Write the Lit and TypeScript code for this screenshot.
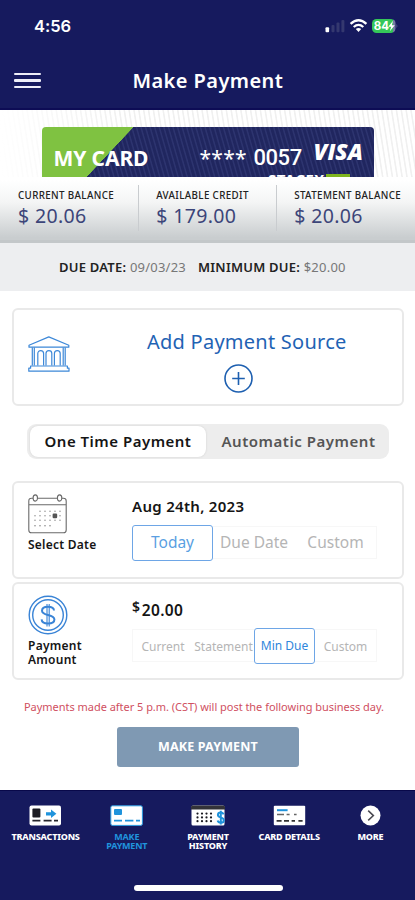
import { LitElement, html, svg, css } from "lit";
import { customElement } from "lit/decorators.js";

const dots = (xs: number[], ys: number[], r: number, fill: string) =>
  ys.map((y) => xs.map((x) => svg`<circle cx=${x} cy=${y} r=${r} fill=${fill} />`));

const bank = html`<svg width="42" height="37" viewBox="0 0 42 37" fill="none" stroke="#3d88d8" stroke-width="1.2" stroke-linejoin="round">
  <path d="M1 9.2 L20.8 .9 L40.8 9.2 V11.2 H1 Z" />
  <path d="M4.3 11.5V29.5M6.3 11.5V29.5M35.2 11.5V29.5M37.2 11.5V29.5" />
  <path d="M9.8 29.5V17.5a2.9 2.9 0 0 1 5.8 0V29.5M18 29.5V17.5a2.9 2.9 0 0 1 5.8 0V29.5M26.4 29.5V17.5a2.9 2.9 0 0 1 5.8 0V29.5" />
  <path d="M2.6 30H39.4V32.2H41V35.2H.8V32.2H2.6Z" />
</svg>`;

const calendar = html`<svg width="39" height="40" viewBox="0 0 39 40" fill="none" stroke="#6a6a6a" stroke-width="1.1">
  <path d="M5 4.3H3.5Q.8 4.3 .8 7V36Q.8 38.8 3.5 38.8H35.4Q38.2 38.8 38.2 36V7Q38.2 4.3 35.4 4.3H34M9.5 4.3H29.5M.8 10.8H38.2" />
  <ellipse cx="7.3" cy="4" rx="2.2" ry="3.1" /><ellipse cx="31.6" cy="4" rx="2.2" ry="3.1" />
  <g stroke="none">
    ${dots([12, 17, 22, 27, 32], [17.2], 0.8, "#999")}
    ${dots([7, 12, 17, 22, 27, 32], [21.8, 26.2], 0.8, "#999")}
    ${dots([7, 12, 17, 22], [31.8], 0.8, "#888")}
    <rect x="24.6" y="19.6" width="4.6" height="4.6" rx="1.2" fill="#555" />
  </g>
</svg>`;

const coin = html`<svg width="40" height="40" viewBox="0 0 40 40" fill="none" stroke="#3a84d6" stroke-width="1.4">
  <circle cx="20" cy="20" r="18.8" /><circle cx="20" cy="20" r="15.3" />
  <path d="M26 15.5C25.8 12.8 23.2 11.8 20 11.8C16.5 11.8 14 13.2 14 15.7C14 18.4 16.8 19.2 20 20C23.4 20.8 26.4 21.8 26.4 24.6C26.4 27.3 23.6 28.6 20 28.6C16.4 28.6 13.8 27.2 13.6 24.4" stroke-width="2" />
  <path d="M19 9V31.4M21.2 9V31.4" stroke-width="1.1" />
</svg>`;

const plus = html`<svg width="29" height="29" viewBox="0 0 29 29" fill="none" stroke="#1d5fb0" stroke-width="1.6">
  <circle cx="14.5" cy="14.5" r="13.5" /><path d="M14.5 8V21M8.2 14.5H20.8" />
</svg>`;

const navTransactions = html`<svg width="33" height="21" viewBox="0 0 33 21">
  <rect x=".5" y=".5" width="31.5" height="20" rx="2" fill="#fff" />
  <rect x="3.4" y="3.6" width="8" height="9" rx="1" fill="#1b1b22" />
  <path d="M17 7.2h5V4.6l5.4 4.2-5.4 4.2v-2.6h-5z" fill="#1f93dc" />
  <path d="M3.4 15.6H11.4M14.6 15.6H22.6M25 15.6H29" stroke="#26262c" stroke-width="1.7" />
</svg>`;
const navPay = html`<svg width="33" height="21" viewBox="0 0 33 21">
  <rect x=".8" y=".8" width="31.6" height="19.6" rx="1.6" fill="#fff" stroke="#2a9be0" stroke-width="1" />
  <rect x="4" y="4" width="8" height="6" rx="1" fill="#1f93dc" />
  <path d="M4 15.6H12M15 15.6H23.4M26 15.6H30" stroke="#1f93dc" stroke-width="1.7" />
</svg>`;
const navHistory = html`<svg width="34" height="21" viewBox="0 0 34 21">
  <rect x=".5" y=".5" width="33" height="20" rx="1.5" fill="#fff" />
  <path d="M0 2.2Q0 .5 1.7 .5H32.3Q34 .5 34 2.2V4.6H0Z" fill="#333338" />
  ${dots([6.5, 11, 15.5, 20], [8.6, 12.4, 16.2], 1.1, "#1b1b22")}
  <path d="M32.6 9.4C32 8 31 7.6 29.8 7.6C28 7.6 26.9 8.5 26.9 10C26.9 13.2 32.8 11.6 32.8 15.2C32.8 16.8 31.6 17.8 29.8 17.8C28.1 17.8 27 17 26.6 15.6M29.8 5.8V19.6" fill="none" stroke="#1f93dc" stroke-width="2" />
</svg>`;
const navDetails = html`<svg width="33" height="21" viewBox="0 0 33 21">
  <rect x=".8" y=".8" width="31.4" height="19.4" rx="1" fill="#fff" />
  <path d="M4 5.2H14.6" stroke="#1f93dc" stroke-width="2" />
  <path d="M4 9.4H11M13.6 9.4H16.6M21 9.4H23.6" stroke="#666" stroke-width="1.5" />
  <path d="M3.6 15.8H8.6M11 15.8H16M18.6 15.8H22M25.4 15.8H29.6" stroke="#333" stroke-width="1.7" />
</svg>`;
const navMore = html`<svg width="21" height="21" viewBox="0 0 21 21">
  <circle cx="10.5" cy="10.5" r="10" fill="#fff" />
  <path d="M8.2 5.6L13.4 10.6L8.2 15.4" fill="none" stroke="#4a4a52" stroke-width="1.5" />
</svg>`;

@customElement("app-root")
export class AppRoot extends LitElement {
  static styles = css`
    :host { display: block; width: 415px; height: 900px; overflow: hidden; background: #fff; font-family: "Noto Sans", "Open Sans", sans-serif; color: #151515; }
    * { box-sizing: border-box; }
    svg { display: block; flex: none; }
    .screen { display: flex; flex-direction: column; height: 900px; white-space: nowrap; }
    .header { height: 110px; background: #161a5e; border-bottom: 2px solid #0d0c55; color: #fff; flex: none; }
    .status { height: 52px; padding: 16px 17px 0 34px; display: flex; justify-content: space-between; }
    .time { font: 600 16.5px/21px Inter, sans-serif; letter-spacing: -.05px; }
    .bar { height: 57px; display: grid; grid-template-columns: 132.5px 1fr; align-items: center; }
    .menu { margin-left: 14px; width: 27px; height: 16px; display: flex; flex-direction: column; justify-content: space-between; }
    .menu i { height: 2.4px; background: #eeeef8; border-radius: 1px; }
    .title { font-size: 20px; font-weight: 600; letter-spacing: .42px; line-height: 30px; }

    .hero { height: 67px; flex: none; padding: 17px 41px 0 42px; background: linear-gradient(90deg, #fff, #ffffff00 30%), repeating-linear-gradient(81deg, #fff 0 2.4px, #f0f0f0 3.2px 4px, #fff 4.8px); }
    .plastic { height: 50px; border-radius: 4px 4px 0 0; overflow: hidden; position: relative; color: #fff;
      background: linear-gradient(133.2deg, #7fc241 0 66.5px, transparent 67px), repeating-linear-gradient(74deg, #20265f 0 2px, #2d346f 3px 3.6px, #20265f 4.4px); }
    .face { display: grid; grid-template-columns: 146px 54px 60px 1fr; padding: 15px 0 0 11.5px; line-height: 32px; height: 50px; }
    .brand { font-size: 21px; font-weight: 700; letter-spacing: -.1px; }
    .mask { font-size: 21px; letter-spacing: .3px; }
    .last { font: 500 22px/31px Roboto, sans-serif; letter-spacing: -.45px; }
    .visa { font: italic 800 22.5px/19px "Open Sans", sans-serif; letter-spacing: 0; }
    .peek { position: absolute; left: 226px; top: 46.5px; display: flex; font-weight: 700; font-size: 15px; line-height: 10px; }
    .peek span { width: 58px; letter-spacing: .5px; }
    .peek b { width: 24px; height: 4px; background: #7fb51f; }

    .balances { height: 66px; flex: none; display: grid; grid-template-columns: 138px 138px 1fr; background: linear-gradient(#fff 5%, #f4f5f5 40%, #c9cdcf 96%); border-bottom: 3px solid #c3c7c9; padding-top: 8px; }
    .bal { padding: 4px 0 0 17.2px; height: 46px; border-left: 1px solid #c9cccf; }
    .bal.first { border-color: transparent; padding-left: 17px; }
    .lab { font-size: 9.8px; font-weight: 500; line-height: 13px; letter-spacing: .36px; color: #222; }
    .val { font-size: 19.5px; font-weight: 400; line-height: 28px; color: #3c4579; letter-spacing: .36px; }

    .due { height: 48px; flex: none; background: #edeef0; display: flex; padding-left: 59px; line-height: 48px; font-size: 13px; letter-spacing: .23px; color: #777; }
    .due b { color: #222; font-weight: 600; }
    .d1 { width: 139px; }

    .box { border: 2px solid #e9e9e9; border-radius: 6px; margin-left: 12px; width: 392px; flex: none; display: grid; grid-template-columns: 118px 1fr; background: #fff; }
    .source { height: 98px; margin-top: 17px; }
    .source .ic { padding: 26px 0 0 14px; }
    .add { padding: 20px 0 0 15px; color: #1f63b4; font-size: 20px; line-height: 24px; letter-spacing: .25px; }
    .add svg { margin: 9.5px 0 0 76.5px; }

    .seg { margin: 18px 0 22px 27px; width: 362px; height: 35px; flex: none; background: #ededed; border-radius: 9px; padding: 2px 2.5px; display: flex; font-size: 15px; font-weight: 600; line-height: 31px; }
    .on { width: 176px; background: #fff; border-radius: 8px; padding-left: 15px; letter-spacing: .5px; box-shadow: 0 0 2px #ccc; }
    .off { padding-left: 16px; color: #555; letter-spacing: .53px; }

    .row { height: 98px; }
    .row + .row { margin-top: 3px; }
    .left { padding: 11px 0 0 14px; font-size: 12px; font-weight: 600; line-height: 14px; }
    .left p { margin: 4px 0 0; letter-spacing: .25px; }
    .main { font-size: 15px; font-weight: 600; line-height: 20px; padding-top: 13px; letter-spacing: .3px; }
    .opts { display: flex; align-items: center; margin-top: 8px; width: 245px; height: 37px; font-weight: 400; color: #b5b5b5; font-size: 15.5px; letter-spacing: 0; }
    .opts span { height: 33px; line-height: 31px; text-align: center; border: 1px solid #f7f7f7; border-width: 1px 0; }
    .opts span:last-child { border-right-width: 1px; }
    .opts .sel { height: 36px; line-height: 33px; border: 1.4px solid #6ea6e6; border-radius: 3px; color: #5a9fe2; }
    .opts.small { font-size: 12px; margin-top: 9px; }
    .opts.small span { line-height: 33px; }
    .small .sel { color: #2f86dc; }
    .small span:first-child { border-left-width: 1px; }
    .amt { display: flex; font-size: 15.5px; padding-top: 3px; height: 21px; }
    .amt sup { font-size: 14px; line-height: 14px; margin-right: 1.5px; }
    .w81 { width: 81px; } .w82 { width: 82px; } .w60 { width: 61px; } .w62 { width: 62px; }

    .note { margin: 19px 0 0 24px; font-size: 11px; line-height: 16px; letter-spacing: -.03px; color: #d0505f; flex: none; }
    .btn { margin: 12px 0 0 117px; width: 182px; height: 40px; flex: none; border: 0; padding: 0; border-radius: 3px; background: #7f99b3; color: #fff; font: 700 12.5px/40px "Noto Sans", sans-serif; letter-spacing: .15px; text-align: center; }
    .nav { margin-top: auto; height: 110px; flex: none; background: #161a5e; border-top: 1.5px solid #08084a; display: grid; grid-template-columns: repeat(5, 81.2px); padding: 14px 0 0 5px; align-content: start; position: relative; color: #fff; }
    .tab { display: flex; flex-direction: column; align-items: center; text-align: center; font-size: 9px; font-weight: 800; line-height: 9px; gap: 6px; letter-spacing: -.2px; }
    .tab.cur { color: #2094dd; font-weight: 700; }
    .home { position: absolute; left: 134px; top: 94px; width: 149px; height: 6px; border-radius: 3px; background: #fff; }
  `;

  tab(icon: unknown, lines: string[], cur = false) {
    return html`<div class="tab ${cur ? "cur" : ""}">${icon}<div>${lines.map((l) => html`<div>${l}</div>`)}</div></div>`;
  }

  bal(label: string, value: string, first = false) {
    return html`<div class="bal ${first ? "first" : ""}"><div class="lab">${label}</div><div class="val">${value}</div></div>`;
  }

  render() {
    return html`<div class="screen">
      <header class="header">
        <div class="status">
          <div class="time">4:56</div>
          <svg width="74" height="20" viewBox="0 0 74 20">
            <rect x="1.5" y="11.2" width="3.6" height="5" rx="1" fill="#fff" />
            <g fill="#34386f"><rect x="7.5" y="9" width="3" height="7.2" rx="1" /><rect x="12.5" y="6.6" width="3" height="9.6" rx="1" /><rect x="17.4" y="4" width="3" height="12.2" rx="1" /></g>
            <g fill="none" stroke="#fff" stroke-width="2.3"><path d="M26.6 7.8Q34.5 .6 42.4 7.8" /><path d="M29.7 11Q34.5 6.8 39.3 11" /></g>
            <path d="M31.8 13Q34.5 10.8 37.2 13L34.5 16Z" fill="#fff" />
            <rect x="48" y="3" width="23" height="14" rx="4.5" fill="#35c759" />
            <path d="M69 3.400q2.500 .8 2.500 4.100v5q0 3.300-2.500 4.100Z" fill="#777aa6" /><path d="M72.600 7.800q1.400 2 0 4.400z" fill="#777aa6" />
            <text x="49.800" y="14.200" fill="#fff" font-family="Inter, sans-serif" font-weight="700" font-size="11.500">84</text>
            <path d="M69 4.800L64.300 10.700H67.200L65.800 15.200L70.800 9.200H67.900Z" fill="#fff" />
          </svg>
        </div>
        <div class="bar"><div class="menu"><i></i><i></i><i></i></div><div class="title">Make Payment</div></div>
      </header>
      <section class="hero"><div class="plastic">
        <div class="face"><span class="brand">MY CARD</span><span class="mask">****</span><span class="last">0057</span><span class="visa">VISA</span></div>
        <div class="peek"><span>STACEY</span><b></b></div>
      </div></section>
      <section class="balances">
        ${this.bal("CURRENT BALANCE", "$ 20.06", true)}${this.bal("AVAILABLE CREDIT", "$ 179.00")}${this.bal("STATEMENT BALANCE", "$ 20.06")}
      </section>
      <section class="due"><div class="d1"><b>DUE DATE:</b> 09/03/23</div><div class="d2"><b>MINIMUM DUE:</b> $20.00</div></section>
      <section class="box source"><div class="ic">${bank}</div><div class="add">Add Payment Source${plus}</div></section>
      <div class="seg"><div class="on">One Time Payment</div><div class="off">Automatic Payment</div></div>
      <section class="box row">
        <div class="left">${calendar}<p>Select Date</p></div>
        <div class="main">Aug 24th, 2023
          <div class="opts"><span class="sel w81">Today</span><span class="w82">Due Date</span><span class="w82">Custom</span></div>
        </div>
      </section>
      <section class="box row pay">
        <div class="left">${coin}<p>Payment<br />Amount</p></div>
        <div class="main"><div class="amt"><sup>$</sup>20.00</div>
          <div class="opts small"><span class="w60">Current</span><span class="w60">Statement</span><span class="sel w60">Min Due</span><span class="w62">Custom</span></div>
        </div>
      </section>
      <div class="note">Payments made after 5 p.m. (CST) will post the following business day.</div>
      <button class="btn">MAKE PAYMENT</button>
      <nav class="nav">
        ${this.tab(navTransactions, ["TRANSACTIONS"])}
        ${this.tab(navPay, ["MAKE", "PAYMENT"], true)}
        ${this.tab(navHistory, ["PAYMENT", "HISTORY"])}
        ${this.tab(navDetails, ["CARD DETAILS"])}
        ${this.tab(navMore, ["MORE"])}
        <div class="home"></div>
      </nav>
    </div>`;
  }
}
